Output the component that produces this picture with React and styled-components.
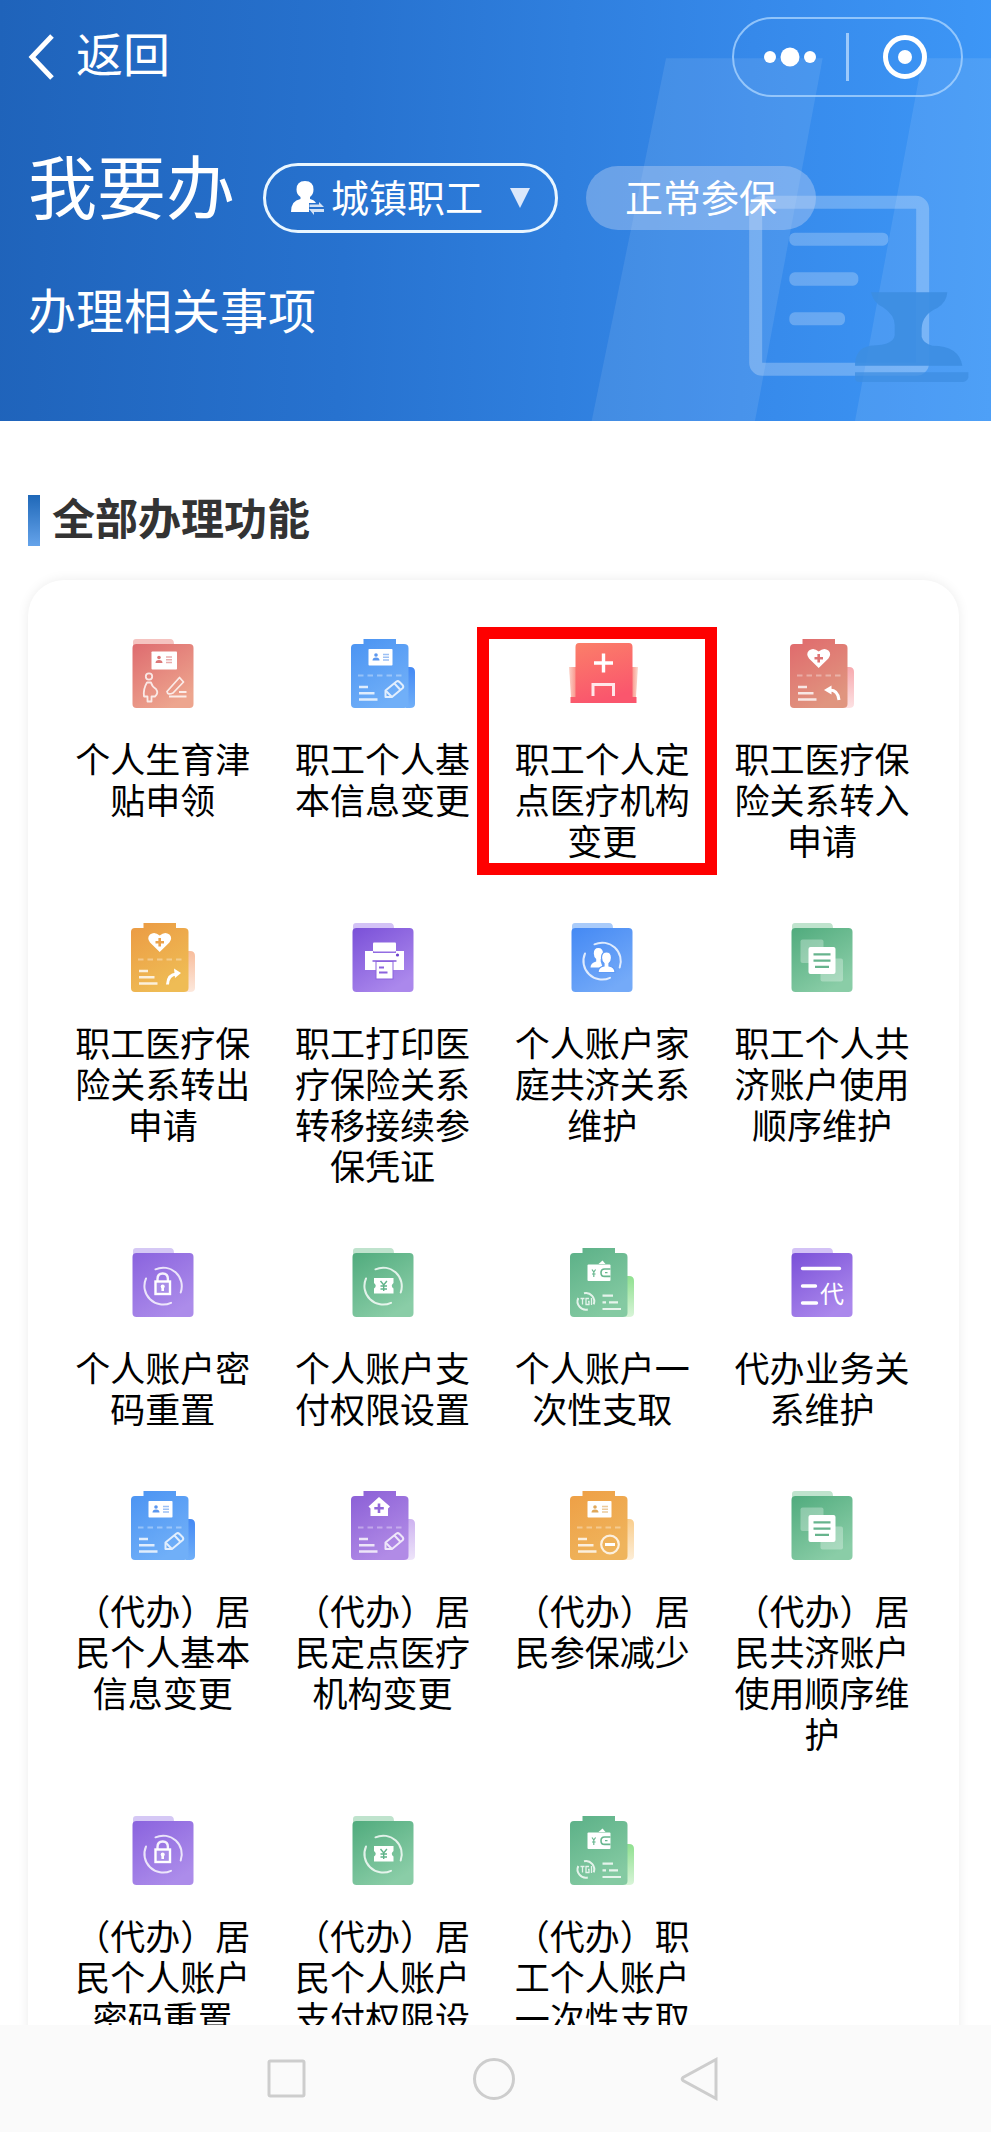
// src/App.jsx
import React from 'react';
import styled, { createGlobalStyle } from 'styled-components';

const GlobalStyle = createGlobalStyle`
  * {
    box-sizing: border-box;
  }
  body {
    margin: 0;
    background: #fff;
    font-family: "Noto Sans CJK SC", "Noto Sans", sans-serif;
  }
`;

const tones = {
  coral: ['#de6b6f', '#eda58e', '#f5c3c0'],
  rose: ['#e0696c', '#e0957f', '#f7a9ae'],
  blue: ['#4489f4', '#74aaf8', '#a9cbfa'],
  azure: ['#4a93f2', '#70aff8', '#4489f4'],
  orange: ['#eb9a43', '#efbc55', '#f8bd9c'],
  amber: ['#ee9f45', '#efb45c', '#f9cd8c'],
  violet: ['#7a50d8', '#ab88ec', '#d3c2f6'],
  lilac: ['#8a63de', '#ac8cea', '#d5c8f5'],
  plum: ['#8a5ed6', '#b18be6', '#cdb2f0'],
  green: ['#50ab7d', '#8acda7', '#bfe3cd'],
  mint: ['#5bb087', '#84caa2', '#8fe08f'],
};

/* ---------- icon bases ---------- */

const Folder = ({ id, tone, children }) => {
  const [from, to, back] = tones[tone];
  return (
    <Icon viewBox="0 0 70 70" aria-hidden="true">
      <defs>
        <linearGradient id={id} x1="0" y1="0" x2="0.6" y2="1">
          <stop offset="0" stopColor={from} />
          <stop offset="1" stopColor={to} />
        </linearGradient>
      </defs>
      <path d="M5 10V3q0-3 3-3h34q4 0 4 5v5z" fill={back} />
      <rect x="4.5" y="5" width="61" height="64" rx="4" fill={`url(#${id})`} />
      {children}
    </Icon>
  );
};

const Clipboard = ({ id, tone, children }) => {
  const [from, to, back] = tones[tone];
  return (
    <Icon viewBox="0 0 70 70" aria-hidden="true">
      <defs>
        <linearGradient id={id} x1="0" y1="0" x2="0.5" y2="1">
          <stop offset="0" stopColor={from} />
          <stop offset="1" stopColor={to} />
        </linearGradient>
        <linearGradient id={`${id}-side`} x1="0" y1="0" x2="0" y2="1">
          <stop offset="0" stopColor={back} />
          <stop offset="1" stopColor={tone === 'azure' ? to : back} stopOpacity={tone === 'azure' ? 1 : 0.35} />
        </linearGradient>
      </defs>
      <path d="M58 28h4q5 0 5 5v32q0 4-5 4h-4z" fill={`url(#${id}-side)`} />
      <path d="M7 5h8.500V0h32.500v5h8q4.500 0 4.500 4v56q0 4-4.500 4H7q-4 0-4-4V9q0-4 4-4z" fill={`url(#${id})`} />
      {children}
    </Icon>
  );
};

/* ---------- icon details ---------- */

const IdCard = ({ color, x = 20.5, y = 10, w = 24, h = 16.5 }) => (
  <g transform={`translate(${x} ${y})`}>
    <rect width={w} height={h} rx="0.8" fill="#fff" />
    <circle cx="7.5" cy="6" r="1.8" fill={color} />
    <path d="M4 11.500q0-3 3.500-3t3.500 3z" fill={color} />
    <path d="M14.500 5.500h6M14.500 8.300h6M14.500 11h6" stroke={color} strokeWidth="1.4" opacity="0.6" />
  </g>
);

const Dashes = () => (
  <path d="M10 36.500h44" stroke="#fff" strokeWidth="2" strokeDasharray="5.5 4" opacity="0.35" />
);

const Lines = () => (
  <path d="M11 48h9M11 54.300h15.500M11 60.500h18.500" stroke="#fff" strokeWidth="2.4" opacity="0.8" />
);

const Pencil = () => (
  <g fill="none" stroke="#fff" strokeWidth="2" strokeLinejoin="round" opacity="0.8">
    <path d="M37.500 58v-6.500L48.500 42.500q1.500-1 3 .5l3 3q1.500 1.700 0 3.200L44 58z" />
    <path d="M46.500 44.500l6 6.500M38 52l5.500 5.500" />
  </g>
);

const Heart = ({ color }) => (
  <g>
    <path d="M31.700 29L22 19.500q-3.500-4.500 0-8 4.500-3.500 9.700 1 5.200-4.500 9.700-1 3.500 3.500 0 8z" fill="#fff" />
    <path d="M31.700 15v8.500M27.500 19.300h8.500" stroke={color} strokeWidth="2.6" />
  </g>
);

const Ring = () => (
  <path
    d="M27.500 21.300A18.600 18.600 0 0 1 52.700 44.500M18 30.500A18.600 18.600 0 0 0 43 54.800"
    fill="none"
    stroke="#fff"
    strokeWidth="2"
    strokeLinecap="round"
    opacity="0.8"
  />
);

/* ---------- icons ---------- */

const Maternity = ({ id }) => (
  <Folder id={id} tone="coral">
    <IdCard color="#dc7878" x={23.5} y={12.5} w={25.5} h={18} />
    <g fill="none" stroke="#fff" strokeWidth="1.8" strokeLinejoin="round" opacity="0.8">
      <circle cx="21" cy="37.500" r="3.200" />
      <path d="M19 43.500h4q1 4 5 6.500 3 4-1 7.500h-3.500v5h-4v-5h-3.500q-1-7.500 3-14z" />
      <path d="M39 52.500l12.500-14 4 4.500-10.500 11q-5.500 2.500-6-1.500zM51 53h7.500M41 57.500h17.500" />
    </g>
  </Folder>
);

const InfoEdit = ({ id }) => (
  <Clipboard id={id} tone="azure">
    <IdCard color="#5b97ef" />
    <Dashes />
    <Lines />
    <Pencil />
  </Clipboard>
);

const Hospital = ({ id }) => (
  <Icon viewBox="0 0 70 70" aria-hidden="true">
    <defs>
      <linearGradient id={id} x1="0" y1="0" x2="0.3" y2="1">
        <stop offset="0" stopColor="#fb8069" />
        <stop offset="1" stopColor="#fa566d" />
      </linearGradient>
      <linearGradient id={`${id}-left`}>
        <stop offset="0" stopColor="#fbd2c8" />
        <stop offset="1" stopColor="#f98a80" />
      </linearGradient>
      <linearGradient id={`${id}-right`}>
        <stop offset="0" stopColor="#f98a80" />
        <stop offset="1" stopColor="#fbdccf" />
      </linearGradient>
    </defs>
    <path d="M2 28h8v30H4z" fill={`url(#${id}-left)`} />
    <path d="M64 28h7l-2 30h-5z" fill={`url(#${id}-right)`} />
    <path d="M12 4h50q3.500 0 3.500 4v50h4v6h-66v-6h5V8q0-4 3.500-4z" fill={`url(#${id})`} />
    <path d="M36.500 14.500v19M27 24h19" stroke="#fff" strokeWidth="3.4" />
    <path d="M26 57V45.500h20.500V57" fill="none" stroke="#fff" strokeWidth="3" opacity="0.85" />
  </Icon>
);

const TransferIn = ({ id }) => (
  <Clipboard id={id} tone="rose">
    <Heart color="#de7474" />
    <Dashes />
    <Lines />
    <path d="M42 51q9-.5 10 10" fill="none" stroke="#fff" strokeWidth="3" />
    <path d="M37 51l7.500-4.500v9z" fill="#fff" />
  </Clipboard>
);

const TransferOut = ({ id }) => (
  <Clipboard id={id} tone="orange">
    <Heart color="#eba24a" />
    <Dashes />
    <Lines />
    <path d="M39.500 61.500q.5-10 9-10.500" fill="none" stroke="#fff" strokeWidth="3" />
    <path d="M53 50l-7-4.500 1 9.500z" fill="#fff" />
  </Clipboard>
);

const Printer = ({ id }) => (
  <Folder id={id} tone="violet">
    <rect x="25" y="19.5" width="23" height="9" rx="1" fill="#fff" />
    <path d="M17 28h8v2h23v-2h8v19H17z" fill="#fff" />
    <path d="M24.500 38h24" stroke="#8b63de" strokeWidth="1.6" />
    <circle cx="49.5" cy="32" r="1.6" fill="#6d43ce" />
    <rect x="28" y="38.500" width="17" height="17.500" fill="#fff" stroke="#8b63de" strokeWidth="1" />
    <path d="M31 44.500h5M31 49.500h8.500" stroke="#8b63de" strokeWidth="1.8" />
  </Folder>
);

const Family = ({ id }) => (
  <Folder id={id} tone="blue">
    <Ring />
    <path
      d="M31.300 25q4.700 0 4.700 5.500 0 3.500-2.300 5.500v2.500l2 6H23.500q0-4.500 5.700-6V36q-2.400-2-2.400-5.500 0-5.500 4.500-5.500z"
      fill="#fff"
    />
    <path
      d="M39.500 29q5 0 5 5.800 0 3.700-2.500 5.700v2.500q6 1 6 6.500H31q0-5.500 6-6.500v-2.500q-2.500-2-2.500-5.700 0-5.800 5-5.800z"
      fill="#fff"
      stroke="#5f9bf6"
      strokeWidth="1.2"
    />
  </Folder>
);

const Order = ({ id }) => (
  <Folder id={id} tone="green">
    <rect x="13.500" y="16.500" width="23" height="23.500" rx="2" fill="#fff" opacity="0.3" />
    <rect x="33.500" y="35.500" width="22.500" height="23" rx="2" fill="#fff" opacity="0.3" />
    <rect x="21.500" y="24" width="27" height="27" rx="2" fill="#fff" />
    <path d="M26.500 31.300h17M26.500 37.700h17M28 43.800h14" stroke="#67b48d" strokeWidth="2.2" />
  </Folder>
);

const Password = ({ id }) => (
  <Folder id={id} tone="lilac">
    <Ring />
    <path d="M29.500 33v-2q0-5.500 5.200-5.500t5.200 5.500v2" fill="none" stroke="#fff" strokeWidth="2.4" opacity="0.9" />
    <rect x="27.500" y="33.500" width="14.500" height="12.500" fill="#a98ee8" stroke="#fff" strokeWidth="2.4" />
    <path d="M34.700 37v6" stroke="#fff" strokeWidth="2.6" />
    <circle cx="34.7" cy="38.5" r="2" fill="#fff" />
  </Folder>
);

const Payment = ({ id }) => (
  <Folder id={id} tone="green">
    <Ring />
    <path d="M26 30h19.500v5q-3.500 2.800 0 5.500v5H26v-5q3.500-2.700 0-5.500z" fill="#fff" />
    <path d="M32.500 33l3.200 4 3.200-4M35.700 37v6M32.500 38h6.500M32.500 41h6.500" fill="none" stroke="#5fb389" strokeWidth="1.4" />
  </Folder>
);

const Withdraw = ({ id }) => (
  <Clipboard id={id} tone="mint">
    <rect x="20.500" y="16.500" width="23" height="16.500" rx="1" fill="#fff" />
    <path d="M31.500 16l4-3.500 3 3.500z" fill="#fff" />
    <path d="M43.500 21h-6q-3.500 0-3.500 3.700t3.500 3.700h6" fill="none" stroke="#68b78f" strokeWidth="1.6" />
    <path d="M25 21.500l1.800 2.500 1.800-2.500M26.800 24v5M25 26h3.600M38 24.700h2.500" fill="none" stroke="#68b78f" strokeWidth="1.2" />
    <g fill="none" stroke="#fff" opacity="0.8">
      <path d="M17 45.300a8.300 8.300 0 0 1 9.700 11M11.300 50a8.300 8.300 0 0 0 9.500 11.500" strokeWidth="2" />
      <path d="M13.500 50.500h4M15.500 50.500v6M22 50.500h-3v6h3v-3h-1M24.500 50v7" strokeWidth="1.3" />
      <path d="M35.500 47.700h10.500M35.500 54.300h3.500M42 54.300h9M35.500 61h18.500" strokeWidth="2.2" />
    </g>
  </Clipboard>
);

const Agency = ({ id }) => (
  <Folder id={id} tone="violet">
    <path d="M15.500 20.500h37M15.500 38h13M15.500 55h14" stroke="#fff" strokeWidth="3.4" strokeLinecap="round" />
    <text x="33" y="55" fontSize="24" fill="#fff">代</text>
  </Folder>
);

const HomeEdit = ({ id }) => (
  <Clipboard id={id} tone="plum">
    <path d="M31 6l11 9.500-2 2V25H22.500v-7.500l-2-2z" fill="#fff" />
    <path d="M31 12.500v9.500M26.300 17.300h9.500" stroke="#9268da" strokeWidth="2.6" />
    <Dashes />
    <Lines />
    <Pencil />
  </Clipboard>
);

const Reduce = ({ id }) => (
  <Clipboard id={id} tone="amber">
    <IdCard color="#e0a85a" />
    <Dashes />
    <Lines />
    <circle cx="43" cy="53.5" r="8.8" fill="none" stroke="#fff" strokeWidth="2.2" opacity="0.8" />
    <path d="M38 53.500h10" stroke="#fff" strokeWidth="3" />
  </Clipboard>
);

const services = [
  { icon: Maternity, name: '个人生育津贴申领' },
  { icon: InfoEdit, name: '职工个人基本信息变更' },
  { icon: Hospital, name: '职工个人定点医疗机构变更', marked: true },
  { icon: TransferIn, name: '职工医疗保险关系转入申请' },
  { icon: TransferOut, name: '职工医疗保险关系转出申请' },
  { icon: Printer, name: '职工打印医疗保险关系转移接续参保凭证' },
  { icon: Family, name: '个人账户家庭共济关系维护' },
  { icon: Order, name: '职工个人共济账户使用顺序维护' },
  { icon: Password, name: '个人账户密码重置' },
  { icon: Payment, name: '个人账户支付权限设置' },
  { icon: Withdraw, name: '个人账户一次性支取' },
  { icon: Agency, name: '代办业务关系维护' },
  { icon: InfoEdit, name: '（代办）居民个人基本信息变更' },
  { icon: HomeEdit, name: '（代办）居民定点医疗机构变更' },
  { icon: Reduce, name: '（代办）居民参保减少' },
  { icon: Order, name: '（代办）居民共济账户使用顺序维护' },
  { icon: Password, name: '（代办）居民个人账户密码重置' },
  { icon: Payment, name: '（代办）居民个人账户支付权限设置' },
  { icon: Withdraw, name: '（代办）职工个人账户一次性支取' },
];

const HeaderArt = () => (
  <Art viewBox="0 0 1353 1263" aria-hidden="true">
    <path d="M378 175H848L645 1263H155z" fill="#fff" opacity="0.09" />
    <path d="M1148 175H1353V1263H945z" fill="#fff" opacity="0.09" />
    <rect x="647" y="607" width="501" height="501" rx="20" fill="none" stroke="#fff" strokeWidth="39" opacity="0.25" />
    <g fill="#fff" opacity="0.24">
      <rect x="748" y="698" width="297" height="39" rx="16" />
      <rect x="748" y="817" width="207" height="40" rx="16" />
      <rect x="748" y="937" width="167" height="39" rx="16" />
    </g>
    <g fill="#3d8ee2">
      <path d="M993 877h229q-2 30-30 47-46 20-47 62v25q6 20 32 26 80 0 90 60H945q0-52 45-60 80 0 74-40v-22q0-30-36-54-28-12-35-44z" opacity="0.92" />
      <path d="M945 1117h340v16q-6 13-18 13H958q-13 0-13-13z" opacity="0.75" />
    </g>
  </Art>
);

const App = () => {
  return (
    <Page>
      <GlobalStyle />
      <Header>
        <HeaderArt />
        <TopBar>
          <Back href="#">
            <svg width="26" height="46" viewBox="0 0 26 46" aria-hidden="true">
              <path d="M24 2L4 23l20 21" fill="none" stroke="#fff" strokeWidth="5" />
            </svg>
            <BackText>返回</BackText>
          </Back>
          <Capsule>
            <CapsuleButton aria-label="更多">
              <svg width="52" height="20" viewBox="0 0 52 20" fill="#fff">
                <circle cx="6" cy="10" r="6" />
                <circle cx="26" cy="10" r="9.5" />
                <circle cx="46" cy="10" r="6" />
              </svg>
            </CapsuleButton>
            <Divider />
            <CapsuleButton aria-label="关闭">
              <svg width="44" height="44" viewBox="0 0 44 44">
                <circle cx="22" cy="22" r="19.5" fill="none" stroke="#fff" strokeWidth="5" />
                <circle cx="22" cy="22" r="7" fill="#fff" />
              </svg>
            </CapsuleButton>
          </Capsule>
        </TopBar>
        <TitleRow>
          <Title>我要办</Title>
          <Picker>
            <svg width="33" height="34" viewBox="0 0 33 34" fill="#fff" aria-hidden="true">
              <path d="M14 0q8.500 0 8.500 8.500 0 5-3.500 7.500v2q4.500 1 6 4H18v9H0q0-11.500 9.500-13v-2Q5.500 13.500 5.500 8.500 5.500 0 14 0z" />
              <path d="M18.500 23.500H28V21l5 5H18.500zM33 28H18l5 6v-3h10z" opacity="0.8" />
            </svg>
            <Select aria-label="参保类型" defaultValue="worker">
              <option value="worker">城镇职工</option>
            </Select>
            <svg width="20" height="20" viewBox="0 0 20 20" aria-hidden="true">
              <path d="M0 0h20L10 20z" fill="#dbe8fb" />
            </svg>
          </Picker>
          <Tag>正常参保</Tag>
        </TitleRow>
        <Subtitle>办理相关事项</Subtitle>
      </Header>

      <Main>
        <SectionTitle>全部办理功能</SectionTitle>
        <Card>
          {services.map(({ icon: ServiceIcon, name, marked }, i) => (
            <Service key={name} href="#" $marked={marked}>
              <ServiceIcon id={`service-${i}`} />
              <Name>{name}</Name>
            </Service>
          ))}
        </Card>
      </Main>

      <NavBar>
        <NavButton aria-label="最近任务">
          <svg width="44" height="44" viewBox="0 0 44 44">
            <rect x="4" y="4" width="35" height="35" rx="1.5" />
          </svg>
        </NavButton>
        <NavButton aria-label="主页">
          <svg width="44" height="44" viewBox="0 0 44 44">
            <circle cx="22" cy="22" r="19.5" />
          </svg>
        </NavButton>
        <NavButton aria-label="后退">
          <svg width="44" height="44" viewBox="0 0 44 44">
            <path d="M37 2.500v39L4 23.500q-1.500-1.500 0-3z" />
          </svg>
        </NavButton>
      </NavBar>
    </Page>
  );
};

export default App;

const Page = styled.div`
  display: flex;
  flex-direction: column;
  height: 100vh;
`;

const Header = styled.header`
  position: relative;
  flex: none;
  padding: 17px 28px 85px;
  color: #fff;
  background: linear-gradient(92deg, #1f63ba 0%, #2772cf 35%, #2f7fde 57%, #3689ea 75%, #3d97f7 100%);
`;

const Art = styled.svg`
  position: absolute;
  right: 0;
  bottom: 0;
  width: 451px;
  height: 421px;
`;

const TopBar = styled.div`
  position: relative;
  display: flex;
  align-items: center;
  justify-content: space-between;
`;

const Back = styled.a`
  display: flex;
  align-items: center;
  gap: 22px;
  color: #fff;
  font-size: 47px;
  line-height: 48px;
  text-decoration: none;
`;

const BackText = styled.span`
  padding-bottom: 10px;
`;

const Capsule = styled.div`
  display: flex;
  align-items: center;
  width: 231px;
  height: 80px;
  border: 2px solid rgba(175, 215, 255, 0.75);
  border-radius: 40px;
`;

const CapsuleButton = styled.button`
  display: flex;
  flex: 1;
  align-items: center;
  justify-content: center;
  height: 100%;
  padding: 0;
  border: none;
  background: none;
  cursor: pointer;
`;

const Divider = styled.span`
  width: 3px;
  height: 48px;
  background: rgba(190, 220, 255, 0.75);
`;

const TitleRow = styled.div`
  position: relative;
  display: flex;
  align-items: center;
  gap: 28px;
  margin-top: 52px;
`;

const Title = styled.h1`
  margin: 0;
  padding-bottom: 28px;
  font-size: 69px;
  font-weight: 400;
  line-height: 70px;
  white-space: nowrap;
`;

const Picker = styled.label`
  display: flex;
  align-items: center;
  height: 70px;
  padding: 0 25px;
  border: 3px solid #e9f6ff;
  border-radius: 35px;
`;

const Select = styled.select`
  appearance: none;
  margin: 0 26px 0 7px;
  padding: 0 0 4px;
  border: none;
  background: none;
  color: #fff;
  font-family: inherit;
  font-size: 38px;
  line-height: 48px;
  cursor: pointer;
`;

const Tag = styled.span`
  padding: 6px 39px 10px;
  border-radius: 32px;
  background: rgba(200, 215, 245, 0.38);
  font-size: 38px;
  line-height: 48px;
  white-space: nowrap;
`;

const Subtitle = styled.p`
  position: relative;
  margin: 33px 0 0;
  font-size: 48px;
  line-height: 56px;
`;

const Main = styled.main`
  flex: 1;
  min-height: 0;
  padding: 74px 32px 0 28px;
  overflow-y: auto;
  scrollbar-width: none;
`;

const SectionTitle = styled.h2`
  display: flex;
  gap: 12px;
  margin: 0 0 34px;
  color: #333;
  font-size: 43px;
  font-weight: 700;
  line-height: 42px;

  &::before {
    content: '';
    width: 12px;
    height: 51px;
    background: linear-gradient(#1f68b8, #65a3ea);
  }
`;

const Card = styled.section`
  display: grid;
  grid-template-columns: repeat(4, 1fr);
  row-gap: 63px;
  padding: 59px 27px 59px 25px;
  border-radius: 36px;
  background: #fff;
  box-shadow: 0 0 12px rgba(0, 0, 0, 0.08);
`;

const Service = styled.a`
  position: relative;
  display: flex;
  flex-direction: column;
  align-items: center;
  gap: 28px;
  color: #000;
  text-decoration: none;

  ${({ $marked }) =>
    $marked &&
    `
    &::after {
      content: '';
      position: absolute;
      inset: -12px -5px -15px -16px;
      border: 12px solid #fe0000;
    }
  `}
`;

const Icon = styled.svg`
  flex: none;
  width: 70px;
  height: 70px;
  overflow: visible;
`;

const Name = styled.span`
  width: 176px;
  font-size: 35px;
  line-height: 41px;
  text-align: center;
`;

const NavBar = styled.nav`
  display: flex;
  flex: none;
  align-items: center;
  justify-content: center;
  gap: 163px;
  height: 107px;
  padding-right: 4px;
  background: #fafafa;
`;

const NavButton = styled.button`
  display: flex;
  padding: 0;
  border: none;
  background: none;
  cursor: pointer;

  svg {
    fill: none;
    stroke: #cdcdcd;
    stroke-width: 3px;
  }
`;
